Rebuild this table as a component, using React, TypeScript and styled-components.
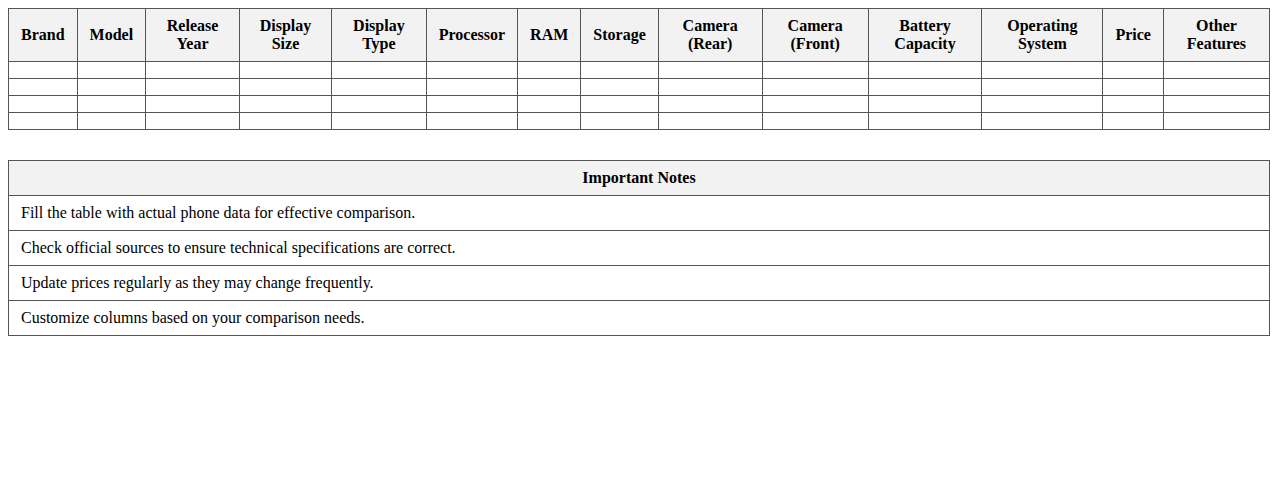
import styled, {createGlobalStyle} from "styled-components"

const GlobalStyle = createGlobalStyle`
  body {
    margin: 8px;
    font-family: "Liberation Serif", "Times New Roman", serif;
    font-size: 16px;
    color: #000;
    background: #fff;
  }
`

const Table = styled.table<{spaced?: boolean}>`
  width: 100%;
  border-collapse: collapse;
  margin-top: ${({spaced}) => (spaced ? "30px" : "0")};
`

const HeadCell = styled.th`
  border: 1px solid #555;
  background-color: #f2f2f2;
  padding: 8px 12px;
  font-weight: bold;
  text-align: center;
`

const Cell = styled.td`
  border: 1px solid #555;
  padding: 8px 12px;
  text-align: left;
`

const columns = [
  "Brand",
  "Model",
  "Release Year",
  "Display Size",
  "Display Type",
  "Processor",
  "RAM",
  "Storage",
  "Camera (Rear)",
  "Camera (Front)",
  "Battery Capacity",
  "Operating System",
  "Price",
  "Other Features",
]

const notes = [
  "Fill the table with actual phone data for effective comparison.",
  "Check official sources to ensure technical specifications are correct.",
  "Update prices regularly as they may change frequently.",
  "Customize columns based on your comparison needs.",
]

export default function App() {
  const emptyRows = [0, 1, 2, 3]

  return (
    <>
      <GlobalStyle />
      <Table>
        <thead>
          <tr>
            {columns.map((col) => (
              <HeadCell key={col}>{col}</HeadCell>
            ))}
          </tr>
        </thead>
        <tbody>
          {emptyRows.map((row) => (
            <tr key={row}>
              {columns.map((col) => (
                <Cell key={col}></Cell>
              ))}
            </tr>
          ))}
        </tbody>
      </Table>

      <Table spaced>
        <thead>
          <tr>
            <HeadCell>Important Notes</HeadCell>
          </tr>
        </thead>
        <tbody>
          {notes.map((note) => (
            <tr key={note}>
              <Cell>{note}</Cell>
            </tr>
          ))}
        </tbody>
      </Table>
    </>
  )
}
